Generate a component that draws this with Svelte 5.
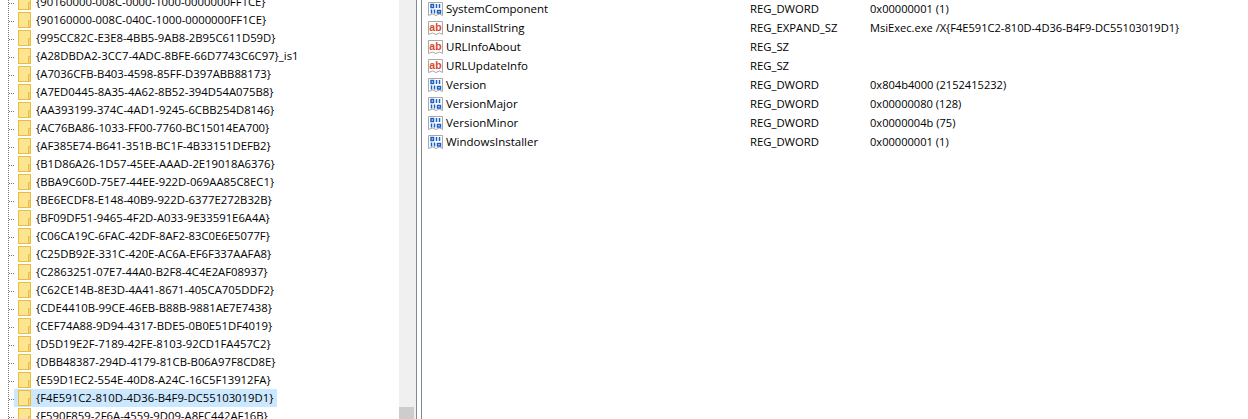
<script>
  const keys = [
    '{90160000-008C-0000-1000-0000000FF1CE}',
    '{90160000-008C-040C-1000-0000000FF1CE}',
    '{995CC82C-E3E8-4BB5-9AB8-2B95C611D59D}',
    '{A28DBDA2-3CC7-4ADC-8BFE-66D7743C6C97}_is1',
    '{A7036CFB-B403-4598-85FF-D397ABB88173}',
    '{A7ED0445-8A35-4A62-8B52-394D54A075B8}',
    '{AA393199-374C-4AD1-9245-6CBB254D8146}',
    '{AC76BA86-1033-FF00-7760-BC15014EA700}',
    '{AF385E74-B641-351B-BC1F-4B33151DEFB2}',
    '{B1D86A26-1D57-45EE-AAAD-2E19018A6376}',
    '{BBA9C60D-75E7-44EE-922D-069AA85C8EC1}',
    '{BE6ECDF8-E148-40B9-922D-6377E272B32B}',
    '{BF09DF51-9465-4F2D-A033-9E33591E6A4A}',
    '{C06CA19C-6FAC-42DF-8AF2-83C0E6E5077F}',
    '{C25DB92E-331C-420E-AC6A-EF6F337AAFA8}',
    '{C2863251-07E7-44A0-B2F8-4C4E2AF08937}',
    '{C62CE14B-8E3D-4A41-8671-405CA705DDF2}',
    '{CDE4410B-99CE-46EB-B88B-9881AE7E7438}',
    '{CEF74A88-9D94-4317-BDE5-0B0E51DF4019}',
    '{D5D19E2F-7189-42FE-8103-92CD1FA457C2}',
    '{DBB48387-294D-4179-81CB-B06A97F8CD8E}',
    '{E59D1EC2-554E-40D8-A24C-16C5F13912FA}',
    '{F4E591C2-810D-4D36-B4F9-DC55103019D1}',
    '{F590F859-2F6A-4559-9D09-A8FC442AF16B}',
  ];
  const selected = '{F4E591C2-810D-4D36-B4F9-DC55103019D1}';

  const values = [
    { name: 'SystemComponent', type: 'REG_DWORD', data: '0x00000001 (1)' },
    { name: 'UninstallString', type: 'REG_EXPAND_SZ', data: 'MsiExec.exe /X{F4E591C2-810D-4D36-B4F9-DC55103019D1}' },
    { name: 'URLInfoAbout', type: 'REG_SZ', data: '' },
    { name: 'URLUpdateInfo', type: 'REG_SZ', data: '' },
    { name: 'Version', type: 'REG_DWORD', data: '0x804b4000 (2152415232)' },
    { name: 'VersionMajor', type: 'REG_DWORD', data: '0x00000080 (128)' },
    { name: 'VersionMinor', type: 'REG_DWORD', data: '0x0000004b (75)' },
    { name: 'WindowsInstaller', type: 'REG_DWORD', data: '0x00000001 (1)' },
  ];
</script>

{#snippet pageIcon(kind)}
  <svg class="val-icon" width="16" height="16" viewBox="0 0 16 16">
    <path d="M0.5 1.5H14.5V14.5L11.5 13L8 14.5L4.5 13L0.5 14.5Z" fill="#fff" stroke="#a9a9a9" />
    {#if kind === 'sz'}
      <text class="ab" x="7.5" y="11" text-anchor="middle">ab</text>
    {:else}
      <!-- 0 1 1 over 1 1 0, the binary value glyph -->
      <path d="M3 3.5H5.5V6.5H3ZM8.5 3V7M11.5 3V7M3.5 8.5V12.5M6.5 8.5V12.5M9.5 9.5H12.5V12H9.5Z" fill="none" stroke="#1a5fc8" stroke-width="1.5" />
    {/if}
  </svg>
{/snippet}

<div class="window">
  <div class="tree">
    <div class="tree-rows">
      {#each keys as key}
        <div class="tree-row">
          <span class="dots"></span>
          <div class="key" class:selected={key === selected}>
            <svg class="folder" width="13" height="16" viewBox="0 0 13 16">
              <rect x="0.5" y="0.5" width="12" height="15" fill="#fde48f" stroke="#e8bd46" />
              <path d="M10.5 15.5V8.5H12.5V15.5Z" fill="#f7d66d" stroke="#e8bd46" />
            </svg>
            <span class="key-label">{key}</span>
          </div>
        </div>
      {/each}
    </div>
    <div class="scrollbar"><div class="thumb"></div></div>
  </div>

  <div class="splitter"></div>

  <div class="values">
    {#each values as row}
      <div class="val-row">
        <div class="val-name">
          {@render pageIcon(row.type.includes('SZ') ? 'sz' : 'bin')}
          <span>{row.name}</span>
        </div>
        <div class="val-type">{row.type}</div>
        <div class="val-data">{row.data}</div>
      </div>
    {/each}
  </div>
</div>

<style>
  :global(body) {
    margin: 0;
    background: #fff;
  }

  .window {
    display: flex;
    width: 1248px;
    height: 419px;
    overflow: hidden;
    background: #fff;
    font-family: "Open Sans", "Liberation Sans", sans-serif;
    color: #000;
  }

  .tree {
    display: flex;
    width: 416px;
    flex-shrink: 0;
    height: 419px;
    overflow: hidden;
  }

  .tree-rows {
    flex: 1;
    margin-top: -7px;
    margin-left: 8px;
    border-left: 1px dotted #777;
    font-size: 11.3px;
  }

  .tree-row {
    display: flex;
    align-items: center;
    height: 18px;
  }

  .dots {
    width: 5px;
    margin-top: 2px;
    border-top: 1px dotted #777;
  }

  .key {
    display: flex;
    align-items: center;
    gap: 5px;
    height: 18px;
    padding: 0 4px;
    white-space: nowrap;
  }

  .key.selected {
    background: #cce8ff;
  }

  .key-label {
    padding-bottom: 2px;
  }

  .folder {
    flex-shrink: 0;
  }

  .scrollbar {
    width: 17px;
    background: #f0f0f0;
    display: flex;
    flex-direction: column;
    justify-content: flex-end;
  }

  .thumb {
    width: 15px;
    height: 12px;
    background: #cdcdcd;
  }

  .splitter {
    width: 4px;
    flex-shrink: 0;
    border-left: 1px solid #828790;
    border-right: 1px solid #828790;
    margin-right: 6px;
  }

  .values {
    flex: 1;
    margin-top: -1px;
    font-size: 11.3px;
  }

  .val-row {
    display: flex;
    align-items: center;
    height: 19px;
    white-space: nowrap;
  }

  .val-name {
    display: flex;
    align-items: center;
    gap: 2px;
    width: 322px;
    font-size: 11.5px;
  }

  .val-type {
    width: 120px;
  }

  .val-data {
    font-size: 11.1px;
  }

  .ab {
    font-family: "Liberation Sans", sans-serif;
    font-size: 10.5px;
    font-weight: 700;
    fill: #d9472b;
  }
</style>
